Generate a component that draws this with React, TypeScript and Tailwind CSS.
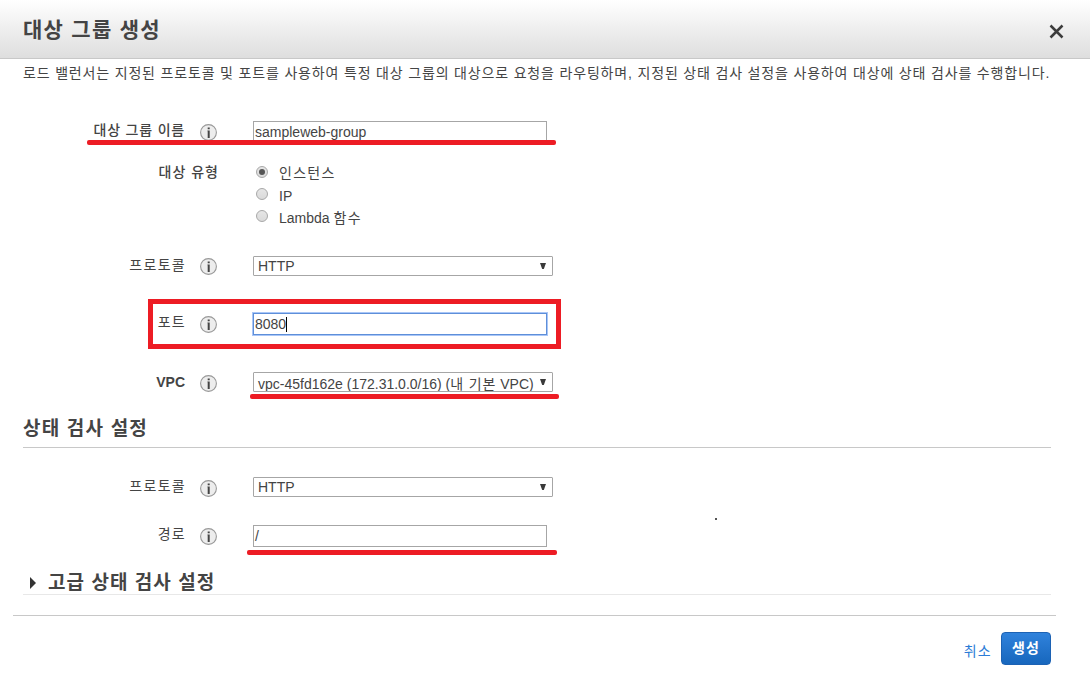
import React from 'react';

interface RowProps {
  label: React.ReactNode;
  className?: string;
  labelClassName?: string;
  iconClassName?: string;
  info?: boolean;
  children: React.ReactNode;
}

function InfoIcon() {
  return (
    <svg width="17" height="17" viewBox="0 0 17 17" className="block">
      <circle cx="8.5" cy="8.5" r="7.9" fill="#ededed" stroke="#999" strokeWidth="1.1" />
      <path d="M7.7 3.6h2v1.6h-2zM7.7 6.4h2V14h-2z" fill="#444" />
      <path d="M7 6.4h.7v1H7z" fill="#999" />
    </svg>
  );
}

function Row({ label, className = '', labelClassName = '', iconClassName = 'pt-[3px]', info = true, children }: RowProps) {
  return (
    <div className={`flex items-start ${className}`}>
      <div className={`shrink-0 text-right leading-[18px] whitespace-nowrap ${info ? 'w-[186px]' : 'w-[219px]'} ${labelClassName}`}>
        {label}
      </div>
      {info && (
        <div className={`w-[52px] shrink-0 pl-[14px] ${iconClassName}`}>
          <InfoIcon />
        </div>
      )}
      {children}
    </div>
  );
}

function Select({ value, className = '' }: { value: React.ReactNode; className?: string }) {
  return (
    <div className="ml-[15px] flex h-5 w-[300px] items-center justify-between overflow-hidden rounded-[1px] border border-[#a6a6a6] bg-white pl-1 pr-1.5">
      <span className={`whitespace-nowrap leading-[18px] ${className}`}>{value}</span>
      <svg width="6" height="6" viewBox="0 0 6 6" className="mb-px">
        <path d="M0 0h6L3.8 6H2.2z" fill="#3a3a3a" />
      </svg>
    </div>
  );
}

function Radio({ label, checked = false, className = '' }: { label: React.ReactNode; checked?: boolean; className?: string }) {
  return (
    <div className="flex h-[22px] items-start">
      <span className="mt-1 flex size-3 items-center justify-center rounded-full border border-[#a8a8a8] bg-linear-to-b from-[#e6e6e6] to-[#dadada]">
        {checked && <span className="size-1.5 rounded-full bg-[#555]" />}
      </span>
      <span className={`ml-[11px] mt-[3px] leading-[18px] ${className}`}>{label}</span>
    </div>
  );
}

export default function App() {
  return (
    <div className="relative h-[684px] w-[1090px] overflow-hidden bg-white font-['Liberation_Sans','Noto_Sans_CJK_KR',sans-serif] text-[14px] text-[#444]">
      <header className="flex h-[59px] items-center justify-between border-b border-[#c8c8c8] bg-linear-to-b from-white to-[#dedede] pl-[23px] pr-[26px]">
        <h1 className="pt-0.5 text-[21px] font-bold leading-[30px] tracking-[1.3px]">대상 그룹 생성</h1>
        <svg width="15" height="15" viewBox="0 0 15 15" className="mt-1">
          <path d="M1.5 1.5l12 12M13.5 1.5l-12 12" stroke="#3c3c3c" strokeWidth="2.5" />
        </svg>
      </header>

      <p className="h-[62px] whitespace-nowrap pl-[23px] pt-1 leading-5 tracking-[0.83px]">
        로드 밸런서는 지정된 프로토콜 및 포트를 사용하여 특정 대상 그룹의 대상으로 요청을 라우팅하며, 지정된 상태 검사 설정을 사용하여 대상에 상태 검사를 수행합니다.
      </p>

      <Row label="대상 그룹 이름" className="h-[41px]" labelClassName="font-medium tracking-[0.8px] pr-px">
        <div className="ml-[15px] h-[22px] w-[294px] border border-[#a6a6a6] pl-px leading-5">sampleweb-group</div>
      </Row>

      <Row label="대상 유형" info={false} className="h-[94px]" labelClassName="font-medium pt-px tracking-[1px]">
        <div className="ml-[37px]">
          <Radio label="인스턴스" checked className="-translate-y-px tracking-[1.3px]" />
          <Radio label="IP" />
          <Radio label={<>Lambda <span className="tracking-[1.3px]">함수</span></>} />
        </div>
      </Row>

      <Row label="프로토콜" className="h-[57px]" labelClassName="tracking-[1.3px]" iconClassName="pt-0.5">
        <Select value="HTTP" />
      </Row>

      <Row label="포트" className="h-[59px]" labelClassName="tracking-[1.3px]">
        <div className="ml-[15px] flex h-[22px] w-[294px] items-center border border-[#5e8fd9] pl-px outline outline-[#a9c6f7]">
          8080
          <span className="h-[15px] w-px bg-black" />
        </div>
      </Row>

      <Row label="VPC" className="h-10" labelClassName="font-bold pt-px pr-px">
        <Select
          value={<>vpc-45fd162e (172.31.0.0/16) (<span className="tracking-[0.9px]">내 기본</span> VPC)</>}
          className="pt-1"
        />
      </Row>

      <h2 className="ml-[23px] h-9 w-[1028px] border-b border-[#c8c8c8] pt-0.5 text-[19px] font-bold leading-[30px] tracking-[1.2px]">
        상태 검사 설정
      </h2>

      <Row label="프로토콜" className="mt-[29px] h-12" labelClassName="tracking-[1.3px]">
        <Select value="HTTP" />
      </Row>

      <Row label="경로" className="h-[41px]" labelClassName="tracking-[1.3px]">
        <div className="ml-[15px] h-[22px] w-[294px] border border-[#a6a6a6] pl-px leading-5">/</div>
      </Row>

      <div className="ml-[23px] flex h-[29px] w-[1028px] items-center border-b border-[#e8e8e8] pl-[7px] pt-1.5">
        <svg width="6" height="12" viewBox="0 0 6 12">
          <path d="M0 0l6 6-6 6z" fill="#333" />
        </svg>
        <h2 className="ml-3 text-[19px] font-bold leading-[22px] tracking-[1.05px]">고급 상태 검사 설정</h2>
      </div>

      <footer className="ml-[13px] mt-5 flex w-[1043px] items-start justify-end border-t border-[#c8c8c8] pr-[5px] pt-4">
        <a className="mr-[9px] mt-[9px] leading-5 tracking-[1.3px] text-[#2b7bd6]">취소</a>
        <button className="h-[33px] w-[50px] rounded-[4px] border border-[#1c62b4] bg-linear-to-b from-[#2f82dc] to-[#1767bd] pb-0.5 text-[14px] font-bold leading-[28px] tracking-[1px] text-white">
          생성
        </button>
      </footer>

      {/* red markers over the required fields */}
      <div className="absolute left-[87px] top-[140px] h-[5px] w-[469px] rounded-xs bg-[#ed1c24]" />
      <div className="absolute left-[148px] top-[299px] h-[50px] w-[413px] border-5 border-[#ed1c24]" />
      <div className="absolute left-[250px] top-[394px] h-[5px] w-[309px] rounded-xs bg-[#ed1c24]" />
      <div className="absolute left-[247px] top-[550px] h-[5px] w-[310px] rounded-xs bg-[#ed1c24]" />
      <div className="absolute left-[715px] top-[518px] size-0.5 bg-[#555]" />
    </div>
  );
}
